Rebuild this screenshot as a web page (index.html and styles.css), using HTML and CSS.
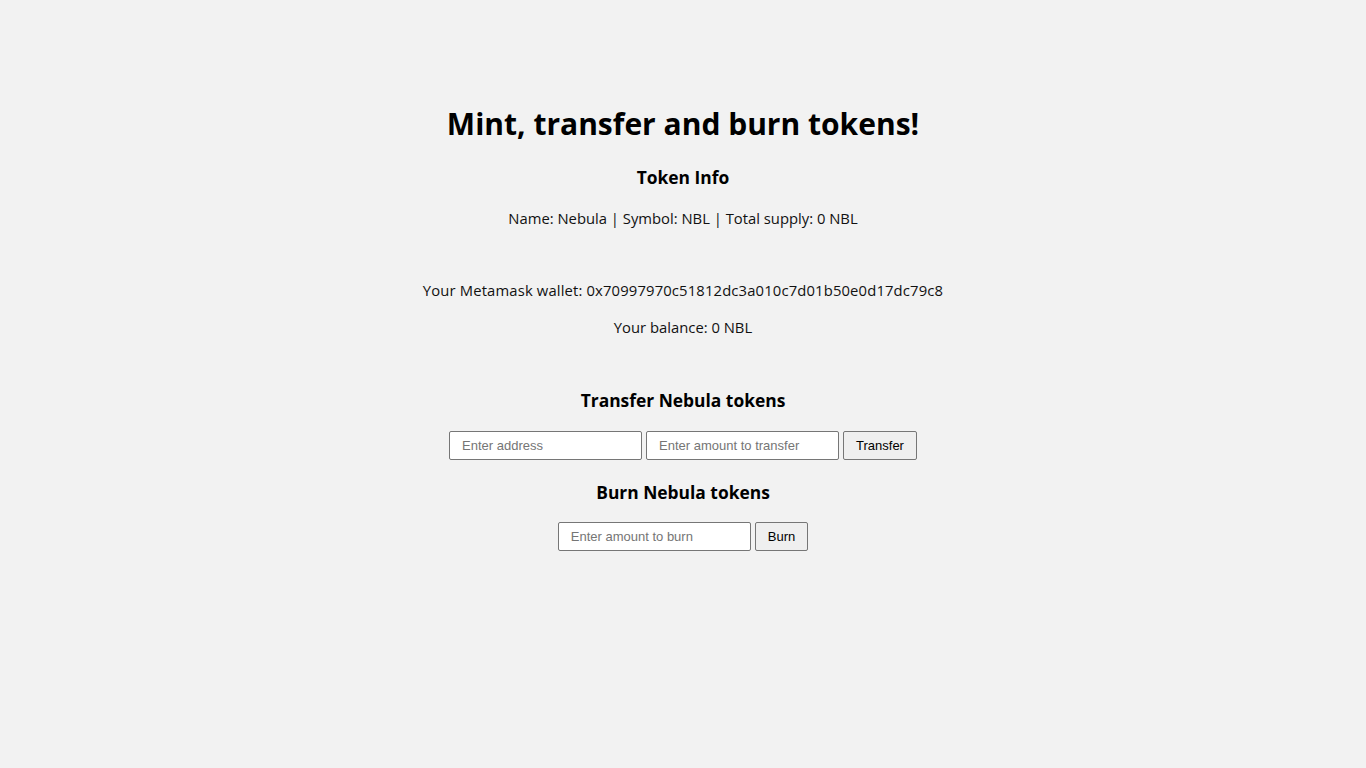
FILE: index.html
```html
<!DOCTYPE html>
<html lang="en">
<head>
<meta charset="utf-8">
<title>Nebula Token</title>
<link rel="stylesheet" href="styles.css">
</head>
<body>
<main class="app">
  <h1 class="title">Mint, transfer and burn tokens!</h1>
  <h3 class="subtitle">Token Info</h3>
  <p class="line">Name: Nebula | Symbol: NBL | Total supply: 0 NBL</p>
  <p class="line wallet">Your Metamask wallet: 0x70997970c51812dc3a010c7d01b50e0d17dc79c8</p>
  <p class="line balance">Your balance: 0 NBL</p>
  <h3 class="subtitle section">Transfer Nebula tokens</h3>
  <div class="row">
    <input class="field" type="text" placeholder="Enter address">
    <input class="field" type="text" placeholder="Enter amount to transfer">
    <button class="btn" type="button">Transfer</button>
  </div>
  <h3 class="subtitle burn">Burn Nebula tokens</h3>
  <div class="row">
    <input class="field" type="text" placeholder="Enter amount to burn">
    <button class="btn" type="button">Burn</button>
  </div>
</main>
</body>
</html>
```

FILE: styles.css
```css
html, body {
  margin: 0;
  padding: 0;
  background: #f2f2f2;
}

body {
  font-family: "Open Sans", "Noto Sans", sans-serif;
  color: #000;
}

.app {
  display: flex;
  flex-direction: column;
  align-items: center;
  padding-top: 103px;
  text-align: center;
}

.title {
  font-size: 30px;
  line-height: 42px;
  font-weight: 700;
  margin: 0 0 20px;
}

.subtitle {
  font-size: 17.4px;
  line-height: 25px;
  font-weight: 700;
  margin: 0 0 18px;
}

.line {
  font-size: 14.8px;
  line-height: 21px;
  margin: 0;
  color: #111;
}

.wallet {
  margin-top: 51px;
  letter-spacing: 0.15px;
}

.balance {
  margin-top: 16px;
}

.section {
  margin-top: 50px;
  margin-bottom: 18px;
}

.burn {
  margin-top: 20px;
  margin-bottom: 17px;
}

.row {
  display: flex;
  gap: 4px;
  align-items: stretch;
}

.field {
  box-sizing: border-box;
  width: 193px;
  height: 29px;
  padding: 0 12px;
  border: 1px solid #767676;
  border-radius: 2px;
  background: #fff;
  font-family: "Liberation Sans", Arial, sans-serif;
  font-size: 13px;
  color: #000;
}

.field::placeholder {
  color: #757575;
}

.btn {
  box-sizing: border-box;
  height: 29px;
  padding: 0 12px;
  border: 1px solid #767676;
  border-radius: 2px;
  background: #efefef;
  font-family: "Liberation Sans", Arial, sans-serif;
  font-size: 13px;
  color: #000;
}
```
